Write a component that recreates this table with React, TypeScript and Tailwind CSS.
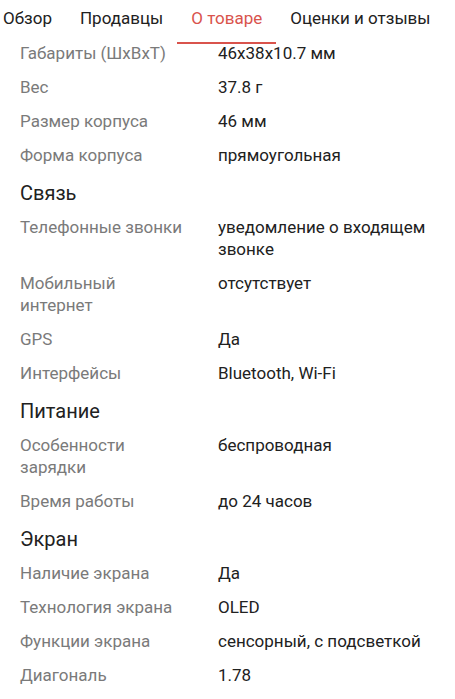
import React from 'react';

type Row = { label: string; value: string };
type Section = { title?: string; rows: Row[] };

const sections: Section[] = [
  {
    rows: [
      { label: 'Габариты (ШхВхТ)', value: '46x38x10.7 мм' },
      { label: 'Вес', value: '37.8 г' },
      { label: 'Размер корпуса', value: '46 мм' },
      { label: 'Форма корпуса', value: 'прямоугольная' },
    ],
  },
  {
    title: 'Связь',
    rows: [
      { label: 'Телефонные звонки', value: 'уведомление о входящем звонке' },
      { label: 'Мобильный интернет', value: 'отсутствует' },
      { label: 'GPS', value: 'Да' },
      { label: 'Интерфейсы', value: 'Bluetooth, Wi-Fi' },
    ],
  },
  {
    title: 'Питание',
    rows: [
      { label: 'Особенности зарядки', value: 'беспроводная' },
      { label: 'Время работы', value: 'до 24 часов' },
    ],
  },
  {
    title: 'Экран',
    rows: [
      { label: 'Наличие экрана', value: 'Да' },
      { label: 'Технология экрана', value: 'OLED' },
      { label: 'Функции экрана', value: 'сенсорный, с подсветкой' },
      { label: 'Диагональ', value: '1.78' },
    ],
  },
];

const tabs = ['Обзор', 'Продавцы', 'О товаре', 'Оценки и отзывы'];

const App = () => {
  return (
    <div className="w-[455px] h-[699px] overflow-hidden bg-white font-['Roboto','Noto_Sans',sans-serif]">
      <div className="sticky top-0 z-10 bg-white h-[44px] flex items-stretch ml-[-11px] whitespace-nowrap">
        {tabs.map((t, i) => (
          <div
            key={t}
            className={
              i === 2
                ? 'px-[14px] pt-[6px] text-[17px] leading-[24px] text-[#d9534c] border-b-2 border-[#d9534c]'
                : 'px-[14px] pt-[6px] text-[17px] leading-[24px] text-[#212121] border-b-2 border-transparent'
            }
          >
            {t}
          </div>
        ))}
      </div>
      <div className="-mt-[8px] px-5">
        {sections.map((s, si) => (
          <div key={si}>
            {s.title && (
              <div className="pt-[7px] pb-[3px] text-[20px] leading-[28px] text-[#212121]">{s.title}</div>
            )}
            {s.rows.map((r) => (
              <div key={r.label} className="flex py-[6px] text-[17px] leading-[22px]">
                <div className="w-[166px] shrink-0 text-[#7a7a7a]">{r.label}</div>
                <div className="ml-[32px] text-[#212121]">{r.value}</div>
              </div>
            ))}
          </div>
        ))}
      </div>
    </div>
  );
};

export default App;
